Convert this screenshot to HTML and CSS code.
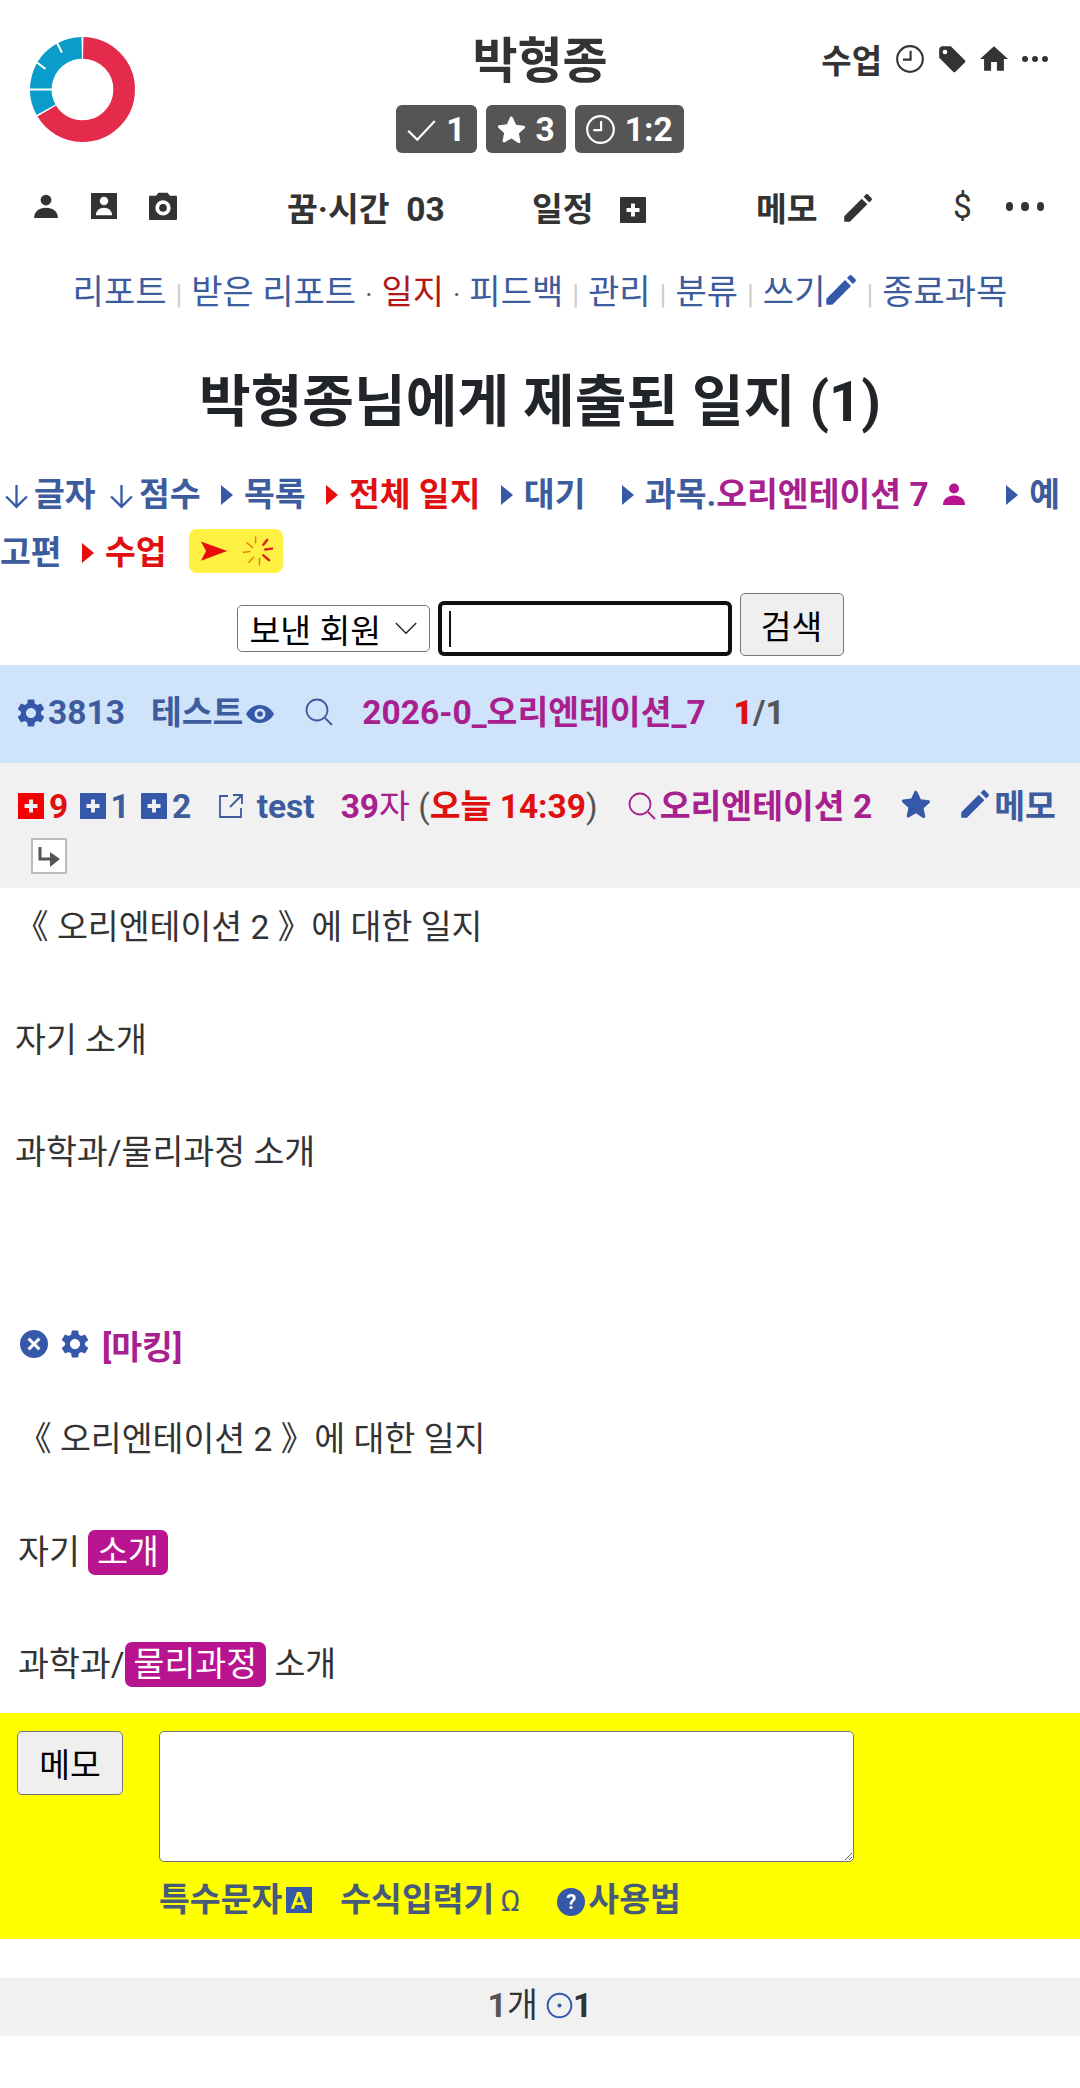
FILE: index.html
```html
<!DOCTYPE html>
<html>

<head>
    <meta name="viewport" content="width=device-width, initial-scale=1">
    <title>제출된 일지</title>
    <link rel="stylesheet" href="styles.css">
</head>

<body>
    <svg class="defs" width="0" height="0">
        <symbol id="i-person" viewBox="0 0 24 24"><circle cx="12" cy="6.500" r="5"/><path d="M1 23c0-6 4.500-9.500 11-9.500s11 3.500 11 9.500z"/></symbol>
        <symbol id="i-contact" viewBox="0 0 24 24"><path fill-rule="evenodd" d="M0 0h24v24H0zM12 3.500a3.900 3.900 0 1 0 0 7.800 3.900 3.900 0 0 0 0-7.800zM4.500 20.500h15c0-4.200-3.200-7-7.500-7s-7.500 2.800-7.500 7z"/></symbol>
        <symbol id="i-camera" viewBox="1 1 22 22"><path fill-rule="evenodd" d="M8.500 1.500h7L17.500 4H22c.6 0 1 .4 1 1v17c0 .6-.4 1-1 1H2c-.6 0-1-.4-1-1V5c0-.6.4-1 1-1h4.500zM12 7.500a6 6 0 1 0 0 12 6 6 0 0 0 0-12z"/><circle cx="12" cy="13.500" r="3"/></symbol>
        <symbol id="i-clock" viewBox="0 0 24 24"><circle class="line" cx="12" cy="12" r="11"/><path class="line" d="M12.500 5v7.500H6"/></symbol>
        <symbol id="i-tag" viewBox="0 0 24 24"><path fill-rule="evenodd" d="M1 4c0-1.700 1.300-3 3-3h7l12 12c.6.600.6 1.400 0 2l-8 8c-.6.600-1.400.6-2 0L1 11zM6 4a2 2 0 1 0 0 4 2 2 0 0 0 0-4z"/></symbol>
        <symbol id="i-home" viewBox="0 0 24 24"><path d="M9.500 22v-7.500h5V22h6V12H24L12 1 0 12h3.500v10z"/></symbol>
        <symbol id="i-plus" viewBox="0 0 24 24"><path fill-rule="evenodd" d="M0 1c0-.6.4-1 1-1h22c.6 0 1 .4 1 1v22c0 .6-.4 1-1 1H1c-.6 0-1-.4-1-1zM10.200 6v4.200H6v3.600h4.200V18h3.600v-4.200H18v-3.600h-4.200V6z"/></symbol>
        <symbol id="i-pencil" viewBox="0 0 24 24"><path d="M1 23v-4.500L15 4.500l4.500 4.500L5.500 23z"/><path d="M16.500 3l1.800-1.800c.5-.5 1.200-.5 1.700 0l2.800 2.800c.5.5.5 1.200 0 1.700L21 7.500z"/></symbol>
        <symbol id="i-check" viewBox="0 0 24 24"><path class="line" d="M1 13l7.500 7.500L23 5"/></symbol>
        <symbol id="i-star" viewBox="0 0 24 24"><path d="M12 1.500c.5 0 .9.3 1.100.7l2.700 5.900 6.400.8c1 .1 1.400 1.400.7 2.100l-4.800 4.400 1.300 6.400c.2 1-.9 1.800-1.800 1.300L12 19.400l-5.600 3.200c-.9.5-2-.3-1.800-1.300l1.300-6.400-4.800-4.400c-.7-.7-.3-2 .7-2.100l6.400-.8 2.700-5.900c.2-.4.6-.7 1.100-.7z"/></symbol>
        <symbol id="i-down" viewBox="1 0 22 24"><path class="line thick" d="M12 1v21M2 12l10 10 10-10"/></symbol>
        <symbol id="i-tri" viewBox="0 0 14 24"><path d="M1 2l12 10L1 22z"/></symbol>
        <symbol id="i-gear" viewBox="2 2 20 20"><path d="M19.140 12.940c.04-.3.06-.61.06-.94 0-.32-.02-.64-.07-.94l2.030-1.580c.18-.14.23-.41.12-.61l-1.920-3.320c-.12-.22-.37-.29-.59-.22l-2.390.96c-.5-.38-1.030-.7-1.620-.94l-.36-2.540c-.04-.24-.24-.41-.48-.41h-3.840c-.24 0-.43.17-.47.41l-.36 2.540c-.59.24-1.130.57-1.620.94l-2.390-.96c-.22-.08-.47 0-.59.22L2.740 8.870c-.12.21-.08.47.12.61l2.030 1.580c-.05.3-.09.63-.09.94s.02.64.07.94l-2.030 1.580c-.18.14-.23.41-.12.61l1.920 3.320c.12.22.37.29.59.22l2.390-.96c.5.38 1.030.7 1.620.94l.36 2.540c.05.24.24.41.48.41h3.840c.24 0 .44-.17.47-.41l.36-2.540c.59-.24 1.130-.56 1.620-.94l2.390.96c.22.08.47 0 .59-.22l1.920-3.320c.12-.22.07-.47-.12-.61l-2.010-1.580zM12 15.600c-1.980 0-3.600-1.620-3.600-3.600s1.620-3.600 3.600-3.600 3.600 1.620 3.600 3.600-1.620 3.600-3.600 3.600z"/></symbol>
        <symbol id="i-eye" viewBox="0 0 28 20"><path fill-rule="evenodd" d="M14 1C8 1 3 4.500 0 10c3 5.500 8 9 14 9s11-3.500 14-9c-3-5.500-8-9-14-9zm0 3.500a5.500 5.500 0 1 1 0 11 5.500 5.500 0 0 1 0-11z"/><circle cx="14" cy="10" r="2.800"/></symbol>
        <symbol id="i-search" viewBox="0 0 28 28"><circle class="line" cx="12" cy="12" r="10.500"/><path class="line" d="M20 20l7 7"/></symbol>
        <symbol id="i-open" viewBox="0 0 26 26"><path class="line" d="M10 3H2v21h21v-9M15 2h9v9M24 2L12 14"/></symbol>
        <symbol id="i-close" viewBox="0 0 24 24"><path fill-rule="evenodd" d="M12 0a12 12 0 1 0 0 24 12 12 0 0 0 0-24zM8.300 6.500L12 10.200l3.700-3.700 1.800 1.800-3.700 3.700 3.700 3.700-1.800 1.800-3.700-3.700-3.700 3.700-1.800-1.800 3.700-3.700-3.700-3.700z"/></symbol>
        <symbol id="i-box-a" viewBox="0 0 24 24"><path fill-rule="evenodd" d="M0 0h24v24H0zM10.200 4.500L4.500 20h3l1.200-3.500h6.600l1.200 3.500h3L13.800 4.500zM12 8l2.400 6H9.600z"/></symbol>
        <symbol id="i-target" viewBox="0 0 24 24"><circle class="line" cx="12" cy="12" r="10.500"/><circle cx="12" cy="12" r="1.800"/></symbol>
        <symbol id="i-reply" viewBox="0 0 36 36"><rect class="reply-box" x="1" y="1" width="34" height="34"/><path class="reply-line" d="M9 9v12h10"/><path class="reply-head" d="M19 14l10 7-10 8z"/></symbol>
    </svg>

    <header class="top">
        <svg class="logo" viewBox="0 0 104 104">
            <circle class="donut-red" cx="52" cy="52" r="40.500" pathLength="360" stroke-dasharray="238 122" transform="rotate(-89 52 52)"/>
            <circle class="donut-blue" cx="52" cy="52" r="40.500" pathLength="360" stroke-dasharray="118 242" transform="rotate(151 52 52)"/>
            <path class="donut-cut" d="M0 52h31M8 26l8 6M27 6l5 10"/>
        </svg>
        <div class="who">
            <div class="who-name">박형종</div>
            <div class="badges">
                <span class="badge"><svg class="ic ic-badge"><use href="#i-check"/></svg>1</span>
                <span class="badge"><svg class="ic ic-badge"><use href="#i-star"/></svg>3</span>
                <span class="badge"><svg class="ic ic-badge"><use href="#i-clock"/></svg>1:2</span>
            </div>
        </div>
        <div class="top-right">
            <span>수업</span>
            <svg class="ic"><use href="#i-clock"/></svg>
            <svg class="ic"><use href="#i-tag"/></svg>
            <svg class="ic"><use href="#i-home"/></svg>
            <span class="dots small"><i></i><i></i><i></i></span>
        </div>
    </header>

    <nav class="mainnav">
        <div class="nav-icons">
            <svg class="ic ic-nav"><use href="#i-person"/></svg>
            <svg class="ic ic-nav"><use href="#i-contact"/></svg>
            <svg class="ic ic-nav ic-cam"><use href="#i-camera"/></svg>
        </div>
        <a class="nav-dream" href="#">꿈·시간&nbsp; 03</a>
        <a class="nav-plan" href="#">일정 <svg class="ic ic-nav"><use href="#i-plus"/></svg></a>
        <a class="nav-memo" href="#">메모 <svg class="ic ic-nav"><use href="#i-pencil"/></svg></a>
        <span class="nav-dollar">$</span>
        <span class="dots"><i></i><i></i><i></i></span>
    </nav>

    <div class="sublinks">
        <a href="#">리포트</a><span class="bar">|</span><a href="#">받은 리포트</a><span class="mid">·</span><a class="on" href="#">일지</a><span class="mid">·</span><a href="#">피드백</a><span class="bar">|</span><a href="#">관리</a><span class="bar">|</span><a href="#">분류</a><span class="bar">|</span><a href="#">쓰기<svg class="ic ic-write"><use href="#i-pencil"/></svg></a><span class="bar">|</span><a href="#">종료과목</a>
    </div>

    <h1 class="page-title">박형종님에게 제출된 일지 (1)</h1>

    <div class="tools">
        <a class="t1" href="#"><svg class="ic ic-down"><use href="#i-down"/></svg>글자</a>
        <a class="t2" href="#"><svg class="ic ic-down"><use href="#i-down"/></svg>점수</a>
        <a class="t3" href="#"><svg class="ic ic-tri"><use href="#i-tri"/></svg>목록</a>
        <a class="t4 red" href="#"><svg class="ic ic-tri"><use href="#i-tri"/></svg>전체 일지</a>
        <a class="t5" href="#"><svg class="ic ic-tri"><use href="#i-tri"/></svg>대기</a>
        <a class="t6" href="#"><svg class="ic ic-tri"><use href="#i-tri"/></svg>과목.<span class="pink">오리엔테이션 7</span> <svg class="ic ic-pink"><use href="#i-person"/></svg></a>
        <a class="t7" href="#"><svg class="ic ic-tri"><use href="#i-tri"/></svg><span>예</span><span>고편</span></a>
        <a class="t8 red" href="#"><svg class="ic ic-tri"><use href="#i-tri"/></svg>수업</a>
        <span class="spark">
            <svg viewBox="0 0 32 24" class="ic-send"><path d="M1 1l30 11L1 23l6-11z"/></svg>
            <svg viewBox="0 0 32 32" class="ic-burst"><path class="burst-thin" d="M13 1v6M4 7l6 5M0 17l7-1M6 27l5-5M17 23v7"/><path class="burst-thick" d="M25 4l-4 5M23 14l7-1M21 20l6 5"/></svg>
        </span>
    </div>

    <form class="search">
        <div class="fake-select">보낸 회원 <svg viewBox="0 0 24 14"><path d="M1 1l11 11L23 1"/></svg></div>
        <div class="fake-input"><i></i></div>
        <button type="button">검색</button>
    </form>

    <div class="band band-blue">
        <svg class="ic ic-in"><use href="#i-gear"/></svg>3813<span class="name">테스트<svg class="ic ic-eye"><use href="#i-eye"/></svg></span><svg class="ic ic-find"><use href="#i-search"/></svg><span class="pink course">2026-0_오리엔테이션_7</span><span class="count"><b class="red">1</b>/1</span>
    </div>

    <div class="band band-gray">
        <svg class="ic ic-sq red"><use href="#i-plus"/></svg><span class="red">9</span>
        <svg class="ic ic-sq gap"><use href="#i-plus"/></svg>1
        <svg class="ic ic-sq gap"><use href="#i-plus"/></svg>2
        <svg class="ic ic-open"><use href="#i-open"/></svg><span class="test">test</span><span class="pink chars">39<em>자</em></span> <span class="paren">(</span><span class="red">오늘 14:39</span><span class="paren">)</span><svg class="ic ic-find2 pink"><use href="#i-search"/></svg><span class="pink">오리엔테이션 2</span><svg class="ic ic-star"><use href="#i-star"/></svg><svg class="ic ic-pen"><use href="#i-pencil"/></svg>메모
        <svg class="ic-reply"><use href="#i-reply"/></svg>
    </div>

    <div class="entry">
        <p>《 오리엔테이션 2 》에 대한 일지</p>
        <p>자기 소개</p>
        <p>과학과/물리과정 소개</p>
    </div>

    <div class="mark-head">
        <svg class="ic ic-mark"><use href="#i-close"/></svg>
        <svg class="ic ic-mark"><use href="#i-gear"/></svg>
        <b class="pink">[마킹]</b>
    </div>

    <div class="entry entry-marked">
        <p>《 오리엔테이션 2 》에 대한 일지</p>
        <p>자기 <mark>소개</mark></p>
        <p>과학과/<mark>물리과정</mark> 소개</p>
    </div>

    <div class="memo">
        <button type="button">메모</button>
        <div class="memo-main">
            <textarea></textarea>
            <div class="memo-links">
                <a href="#">특수문자<svg class="ic ic-a"><use href="#i-box-a"/></svg></a>
                <a href="#">수식입력기<span class="omega">Ω</span></a>
                <a href="#"><span class="help">?</span>사용법</a>
            </div>
        </div>
    </div>

    <div class="pager"><b class="gray">1</b>개 <svg class="ic ic-target"><use href="#i-target"/></svg><b>1</b></div>
</body>

</html>
```

FILE: styles.css
```css
body {
    font-family: Roboto, "Noto Sans CJK KR", sans-serif;
    font-size: 33.600px;
    margin: 0;
    padding: 0;
    background-color: #fff;
    color: #333;
    height: 2088px;
    overflow: hidden;
}

a {
    color: inherit;
    text-decoration: none;
}

.defs {
    display: block;
    height: 0;
}

.ic {
    width: 28px;
    height: 28px;
    fill: currentColor;
    flex: none;
}

.line {
    fill: none;
    stroke: currentColor;
    stroke-width: 1.800;
}

.line.thick {
    stroke-width: 2.200;
}

.red {
    color: #e01010;
}

.pink {
    color: #a8208e;
}

/* header */
.top {
    display: grid;
    grid-template-columns: 1fr 1fr 1fr;
    height: 165px;
    color: #333;
}

.logo {
    width: 107px;
    height: 107px;
    margin: 36px 0 0 29px;
}

.logo circle {
    fill: none;
    stroke-width: 21;
}

.donut-red {
    stroke: #e52b4c;
}

.donut-blue {
    stroke: #0a9ccb;
}

.donut-cut {
    fill: none;
    stroke: #fff;
    stroke-width: 2;
}

.who {
    text-align: center;
}

.who-name {
    font-size: 49px;
    font-weight: 700;
    line-height: 70px;
    margin-top: 27px;
}

.badges {
    display: flex;
    justify-content: center;
    gap: 9px;
    margin-top: 8px;
    white-space: nowrap;
}

.badge {
    display: flex;
    align-items: center;
    gap: 10px;
    height: 48px;
    padding: 0 11px;
    background-color: #555;
    color: #fff;
    border-radius: 6px;
    font-size: 33.500px;
    font-weight: 700;
}

.ic-badge {
    width: 29px;
    height: 29px;
}

.top-right {
    display: flex;
    align-items: center;
    justify-content: flex-end;
    gap: 14px;
    height: 40px;
    margin-top: 39px;
    padding-right: 32px;
    font-size: 33px;
    font-weight: 700;
}

.dots {
    display: flex;
    gap: 5px;
    width: 38px;
}

.dots i {
    width: 9px;
    height: 9px;
    border-radius: 50%;
    background-color: #333;
}

.dots.small {
    gap: 4px;
    width: 26px;
}

.dots.small i {
    width: 6px;
    height: 6px;
}

/* nav */
.mainnav {
    display: flex;
    align-items: center;
    height: 50px;
    margin-top: 16px;
    padding-left: 33px;
    font-size: 33.500px;
    font-weight: 700;
    white-space: nowrap;
}

.nav-icons {
    display: flex;
    align-items: center;
    gap: 32px;
    width: 254px;
}

.ic-nav {
    width: 26px;
    height: 26px;
    vertical-align: -2px;
}

.ic-cam {
    width: 28px;
    height: 28px;
}

.nav-dream {
    width: 245px;
}

.nav-plan {
    width: 224px;
}

.nav-plan .ic-nav {
    margin-left: 18px;
}

.nav-memo {
    width: 197px;
}

.nav-memo .ic-nav {
    width: 30px;
    height: 30px;
    margin-left: 17px;
}

.nav-dollar {
    font-weight: 400;
    width: 53px;
}

.mainnav .dots {
    gap: 8px;
}

/* sub links */
.sublinks {
    text-align: center;
    color: #3d5c9e;
    font-size: 34px;
    line-height: 48px;
    margin-top: 37px;
    white-space: nowrap;
}

.sublinks .on {
    color: #b01818;
}

.bar {
    color: #ccc;
    margin: 0 9px;
    font-size: 28px;
}

.mid {
    color: #555;
    margin: 0 9px;
    font-size: 28px;
}

.ic-write {
    width: 32px;
    height: 32px;
    color: #3558a8;
    vertical-align: -2px;
}

.page-title {
    font-size: 56.200px;
    font-weight: 700;
    color: #212529;
    text-align: center;
    line-height: 70px;
    margin: 48px 0 0;
}

/* toolbar */
.tools {
    margin-top: 29px;
    font-size: 33.500px;
    font-weight: 700;
    line-height: 58px;
    color: #3d5c9e;
    word-break: break-all;
}

.tools a {
    margin-right: 11px;
}

.tools .t1 {
    margin-left: 5px;
    margin-right: 6px;
}

.tools .t4 {
    margin-right: 11px;
}

.tools .t5 {
    margin-right: 27px;
}

.tools .t6 {
    margin-right: 31px;
}

.ic-down {
    width: 23px;
    height: 25px;
    color: #3558a8;
    margin-right: 6px;
    vertical-align: -3px;
}

.ic-tri {
    width: 14px;
    height: 24px;
    color: #3558a8;
    margin-right: 10px;
    vertical-align: -1px;
}

.red .ic-tri {
    color: #e80c0c;
}

.ic-pink {
    color: #b8148f;
    width: 24px;
    height: 24px;
    margin-left: 5px;
    vertical-align: 0;
}

.spark {
    display: inline-flex;
    align-items: center;
    justify-content: space-between;
    box-sizing: border-box;
    width: 94px;
    height: 44px;
    padding: 0 9px 0 11px;
    margin-left: 3px;
    background-color: #fff143;
    border-radius: 8px;
    vertical-align: 1px;
}

.ic-send {
    width: 28px;
    height: 24px;
    fill: #e80c0c;
}

.ic-burst {
    width: 31px;
    height: 31px;
    fill: none;
    stroke-linecap: round;
}

.burst-thin {
    stroke: #e8800c;
    stroke-width: 1.500;
}

.burst-thick {
    stroke: #d8281c;
    stroke-width: 2.500;
}

/* search */
.search {
    display: flex;
    justify-content: center;
    align-items: flex-end;
    gap: 8px;
    height: 63px;
    margin-top: 11px;
    color: #000;
    font-size: 33.500px;
}

.fake-select {
    display: flex;
    align-items: center;
    justify-content: space-between;
    box-sizing: border-box;
    width: 193px;
    height: 47px;
    margin-bottom: 4px;
    padding: 0 11px 0 12px;
    border: 1px solid #767676;
    border-radius: 5px;
    white-space: nowrap;
}

.fake-select svg {
    width: 24px;
    height: 13px;
    flex: none;
    fill: none;
    stroke: #222;
    stroke-width: 1.500;
}

.fake-input {
    display: flex;
    align-items: center;
    box-sizing: border-box;
    width: 294px;
    height: 55px;
    padding-left: 7px;
    border: 4px solid #111;
    border-radius: 6px;
}

.fake-input i {
    width: 2px;
    height: 36px;
    background-color: #111;
}

.search button,
.memo button {
    font-family: inherit;
    font-size: 33.500px;
    color: #000;
    background-color: #efefef;
    border: 1px solid #767676;
    border-radius: 5px;
    padding: 0;
}

.search button {
    width: 104px;
    height: 63px;
}

/* bands */
.band {
    font-weight: 700;
    font-size: 33.500px;
    color: #3d5c9e;
}

.band-blue {
    height: 98px;
    margin-top: 9px;
    padding-left: 17px;
    line-height: 96px;
    background-color: #cfe3fb;
    white-space: nowrap;
}

.ic-in {
    width: 28px;
    height: 28px;
    color: #3558a8;
    vertical-align: -3px;
    margin-right: 3px;
}

.name {
    margin-left: 26px;
}

.ic-eye {
    width: 28px;
    height: 20px;
    color: #3558a8;
    margin-left: 3px;
}

.ic-find {
    width: 28px;
    height: 28px;
    margin-left: 31px;
    vertical-align: -2px;
}

.course {
    margin-left: 29px;
}

.count {
    margin-left: 28px;
    color: #555;
}

.count b {
    color: #e01010;
}

.band-gray {
    box-sizing: border-box;
    height: 125px;
    padding: 22px 0 0 18px;
    line-height: 44px;
    background-color: #f1f1f2;
}

.ic-sq {
    width: 26px;
    height: 26px;
    color: #3558a8;
    vertical-align: -1px;
    margin-right: 5px;
}

.ic-sq.red {
    color: #f40000;
}

.ic-sq.gap {
    margin-left: 3px;
}

.ic-open {
    width: 26px;
    height: 26px;
    margin: 0 13px 0 18px;
    vertical-align: -1px;
}

.chars {
    margin-left: 26px;
}

.chars em {
    font-style: normal;
    font-weight: 400;
}

.paren {
    color: #555;
    font-weight: 400;
}

.ic-find2 {
    width: 28px;
    height: 28px;
    margin: 0 4px 0 30px;
    vertical-align: -2px;
}

.ic-star {
    width: 30px;
    height: 30px;
    margin: 0 29px;
    color: #3558a8;
    vertical-align: -1px;
}

.ic-pen {
    width: 30px;
    height: 30px;
    color: #3558a8;
    margin-right: 4px;
    vertical-align: -1px;
}

.ic-reply {
    display: block;
    width: 36px;
    height: 36px;
    margin: 9px 0 0 13px;
}

.reply-box {
    fill: #fff;
    stroke: #bbb;
    stroke-width: 2;
}

.reply-line {
    fill: none;
    stroke: #555;
    stroke-width: 3;
}

.reply-head {
    fill: #555;
}

/* entry text */
.entry {
    padding-left: 15px;
    padding-top: 12px;
    line-height: 56px;
}

.entry p {
    margin: 0 0 56.500px;
}

.mark-head {
    display: flex;
    align-items: center;
    gap: 13px;
    height: 40px;
    margin-top: 143px;
    padding-left: 20px;
    font-size: 33.500px;
}

.ic-mark {
    width: 28px;
    height: 28px;
    color: #3558a8;
}

.entry-marked {
    padding-left: 18px;
    padding-top: 48px;
}

mark {
    color: #fff;
    background-color: #b8148f;
    padding: 3px 9px;
    border-radius: 7px;
}

/* memo box */
.memo {
    display: flex;
    align-items: flex-start;
    gap: 36px;
    box-sizing: border-box;
    height: 226px;
    margin-top: -37px;
    padding: 18px 0 0 17px;
    background-color: #ffff00;
}

.memo button {
    width: 106px;
    height: 64px;
}

.memo textarea {
    display: block;
    box-sizing: border-box;
    width: 695px;
    height: 131px;
    margin: 0;
    background-color: #fff;
    border: 1px solid #767676;
    border-radius: 5px;
}

.memo-links {
    display: flex;
    gap: 28px;
    margin-top: 16px;
    font-size: 33.500px;
    font-weight: 700;
    line-height: 44px;
    color: #465a7a;
}

.ic-a {
    width: 26px;
    height: 26px;
    color: #3558a8;
    margin-left: 4px;
    vertical-align: -2px;
}

.omega {
    margin-left: 6px;
    font-weight: 400;
    font-size: 30px;
}

.help {
    display: inline-block;
    width: 28px;
    height: 28px;
    margin: 0 3px 0 9px;
    border-radius: 50%;
    background-color: #3558a8;
    color: #fff;
    font-size: 20px;
    line-height: 28px;
    text-align: center;
    vertical-align: 2px;
}

/* pager */
.pager {
    height: 58px;
    margin-top: 39px;
    line-height: 56px;
    text-align: center;
    background-color: #f1f1f1;
}

.gray {
    color: #555;
}

.ic-target {
    width: 27px;
    height: 27px;
    color: #3558a8;
    vertical-align: -2px;
}
```
